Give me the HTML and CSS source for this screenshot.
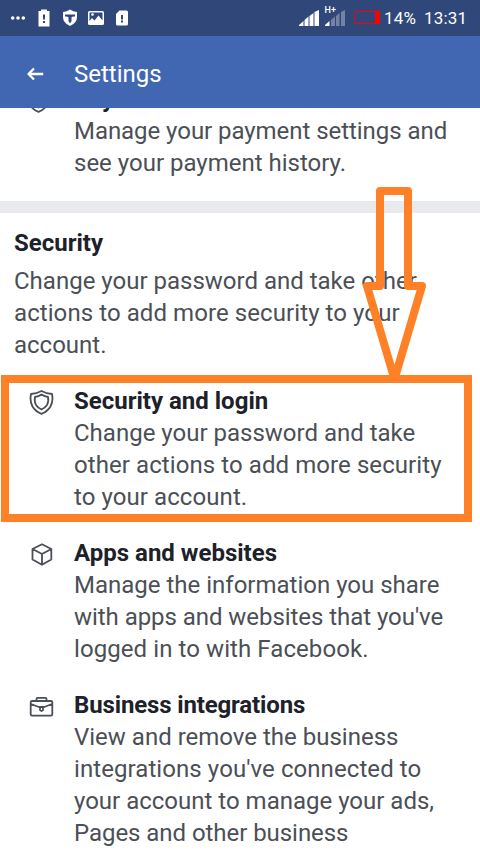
FILE: index.html
```html
<!DOCTYPE html>
<html lang="en">
<head>
<meta charset="utf-8">
<title>Settings</title>
<link rel="stylesheet" href="styles.css">
</head>
<body>
<div class="screen">
  <div class="status">
    <svg class="status-left" width="140" height="36" viewBox="0 0 140 36" fill="#fff">
      <circle cx="12.7" cy="18" r="1.8"/><circle cx="18" cy="18" r="1.8"/><circle cx="23.3" cy="18" r="1.8"/>
      <path d="M41 9.500h6v1.500h2.500v15.500h-11V11H41z"/>
      <path d="M63 12q4-.5 7-2.500 3 2 7 2.500v5q0 6-7 9-7-3-7-9z"/>
      <path d="M89.500 11h13q1.500 0 1.500 1.500v11q0 1.500-1.500 1.500h-13q-1.500 0-1.500-1.500v-11q0-1.500 1.500-1.500z"/>
      <path d="M119.500 10.500h7q1.500 0 1.500 1.500v12q0 1.500-1.500 1.500h-9q-1.500 0-1.500-1.500V14z"/>
      <g fill="#30477a"><path d="M43 14.500h2v5h-2zM43 21h2v2h-2zM121 15h2v4.500h-2zM121 20.500h2v2h-2z"/>
      <path d="M65 14.500h10v2q-2.500-.3-3.500.7V21l-1.500 2.500-1.500-2.500v-3.800q-1-1-3.500-.7z"/>
      <path d="M89.500 12.500h13v8l-4-5-4 5-2.500-2.500-2.500 3z"/></g>
      <circle cx="92.500" cy="14.500" r="1.300"/>
    </svg>
    <svg class="status-right" width="92" height="36" viewBox="0 0 92 36">
      <path fill="#fff" d="M9 26v-1l4.500-4v5zM14.500 26v-6l4-3.500V26zM19.500 26V16l4-3v13zM24.500 26V12l4.500-2v16z"/>
      <path fill="#fff" d="M35 26v-1l4.500-4v5z"/>
      <path fill="#7582a5" d="M41 26v-6l4-3.500V26zM46 26V16l3.500-3v13zM51 26V12l4-2v16z"/>
      <text x="34.500" y="13" class="net">H+</text>
      <path d="M65.500 11.500H89v12H65.500v-2q-1-.5-1-2v-4q0-1.500 1-2z" fill="none" stroke="#f00"/>
      <path d="M85 11h5v13h-5z" fill="#f00"/>
    </svg>
    <span class="percent">14%</span>
    <span class="clock">13:31</span>
  </div>
  <header class="bar">
    <svg width="18" height="16" viewBox="0 0 18 16" fill="none" stroke="#fff" stroke-width="2.300"><path d="M2.500 8h14.700M8 2.500 2.500 8l5.500 5.500" stroke-linejoin="round"/></svg>
    <h1>Settings</h1>
  </header>
  <main class="content">
    <section class="item first">
      <svg class="icon" viewBox="0 0 26 26"><use href="#shield"/></svg>
      <div><h3>Payments</h3><p><span class="tight">Manage your payment settings and</span><br>see your payment history.</p></div>
    </section>
    <div class="divider"></div>
    <section class="intro"><h2>Security</h2><p>Change your password and take other<br><span class="loose">actions to add more security to your</span><br>account.</p></section>
    <section class="item">
      <svg class="icon" viewBox="0 0 26 26"><g id="shield"><path d="M13.500 2Q9 4.500 3 5 1.500 12 4.500 17.500 7.500 22.500 13.500 24.800 19.500 22.500 22.500 17.500 25.500 12 24 5 18 4.500 13.500 2z"/><path d="M13.500 5.500Q10.500 7.500 7 8 6 12.500 8 16 10 19 13.500 20.500 17 19 19 16 21 12.500 20 8 16.500 7.500 13.500 5.500z"/></g></svg>
      <div><h3>Security and login</h3><p>Change your password and take<br><span class="loose">other actions to add more security</span><br><span class="loose">to your account.</span></p></div>
    </section>
    <section class="item">
      <svg class="icon" viewBox="0 0 26 26"><path d="M14 3.300 23.300 8v10.500L14 23.800 4.500 18.500V8zM4.500 8l9.500 5 9.300-5M14 13v10.800"/></svg>
      <div><h3>Apps and websites</h3><p>Manage the information you share<br><span class="tight">with apps and websites that you've</span><br><span class="loose">logged in to with Facebook.</span></p></div>
    </section>
    <section class="item">
      <svg class="icon" viewBox="0 0 26 26"><path d="M4 8h19q1.300 0 1.300 1.300v12q0 1.300-1.300 1.300H4q-1.300 0-1.300-1.300v-12Q2.700 8 4 8zM8.500 8V5.800q0-1 1-1h8q1 0 1 1V8M3 11l9 3.500M24 11l-9 3.500M12 14h3v3l-1.500 1-1.500-1z"/></svg>
      <div><h3 class="tight">Business integrations</h3><p>View and remove the business<br><span class="loose">integrations you've connected to</span><br>your account to manage your ads,<br><span class="tight">Pages and other business</span></p></div>
    </section>
  </main>
  <svg class="marks" width="480" height="854" viewBox="0 0 480 854" fill="none" stroke="#ff8127" stroke-width="8">
    <path d="M5 379h463v139H5z"/>
    <path stroke-linejoin="round" d="M380 191h28v95h14l-27.500 93L367 286h13z"/>
  </svg>
</div>
</body>
</html>
```
FILE: styles.css
```css
* { box-sizing: border-box; }
body { margin: 0; font-family: Roboto, sans-serif; background: #fff; }
h1, h2, h3, p { margin: 0; }
.screen { position: relative; width: 480px; height: 854px; overflow: hidden; display: flex; flex-direction: column; }
.status { height: 36px; flex: none; background: #30477a; color: #fff; display: flex; align-items: center; font-size: 17px; line-height: 36px; }
.status-left { flex: none; }
.status-right { margin-left: 150px; flex: none; }
.percent { width: 40px; margin-left: 2px; letter-spacing: .2px; }
.clock { letter-spacing: .2px; }
.net { font: 500 9px Roboto, sans-serif; fill: #fff; }
.bar { height: 72px; flex: none; background: #4267b2; color: #fff; display: flex; align-items: center; padding: 3px 0 0 26px; gap: 30px; }
.bar h1 { font-size: 24px; font-weight: 400; line-height: 32px; }
.content { flex: 1; min-height: 0; overflow: hidden; color: #4b4f56; font-size: 24px; line-height: 32px; white-space: nowrap; }
h2, h3 { font-size: 24px; line-height: 32px; font-weight: 700; color: #1d2129; }
.item { display: flex; gap: 20px; padding: 0 0 0 28px; margin-bottom: 24px; }
.first { margin: -25px 0 22px; }
.first .icon { margin-left: -3px; margin-right: 3px; }
.tight { letter-spacing: -.05px; }
h3.tight { letter-spacing: -.14px; }
.loose { letter-spacing: .08px; }
.icon { width: 26px; height: 26px; margin-top: 4px; flex: none; fill: none; stroke: #4b4f56; stroke-width: 1.8; stroke-linejoin: round; }
.divider { height: 12px; background: #e9eaee; }
.intro { padding: 14px 14px 24px; }
.intro p { padding-top: 6px; }
.marks { position: absolute; left: 0; top: 0; }
```
